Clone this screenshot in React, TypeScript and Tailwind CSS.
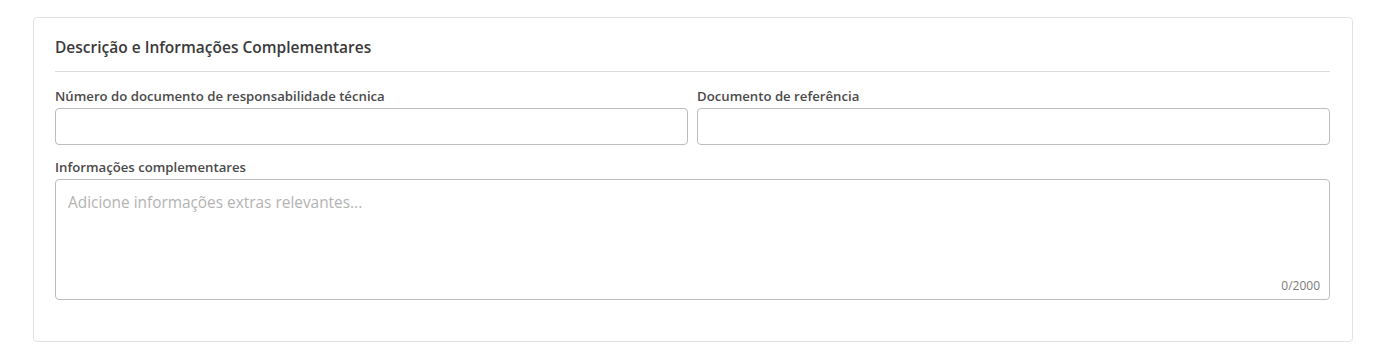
import React, { useState } from "react";

export default function App() {
  const [numero, setNumero] = useState("");
  const [referencia, setReferencia] = useState("");
  const [info, setInfo] = useState("");

  return (
    <div className="min-h-[355px] bg-white pt-[17px] pl-[33px] font-['Open_Sans',sans-serif]">
      <section className="w-[1320px] h-[325px] rounded-[4px] border border-[#e2e2e2] bg-white pl-[21px] pr-[22px] pt-[19px]">
        {/* Header */}
        <h2 className="border-b border-[#dcdcdc] pb-[14px] text-[15.5px] leading-[20px] font-semibold text-[#3a3a3a]">
          Descrição e Informações Complementares
        </h2>

        {/* Row 1 */}
        <div className="mt-[15px] grid grid-cols-2 gap-[9px]">
          <label className="flex flex-col gap-[3px]">
            <span className="text-[13.2px] leading-[18px] font-semibold text-[#4a4a4a]">
              Número do documento de responsabilidade técnica
            </span>
            <input
              value={numero}
              onChange={(e) => setNumero(e.target.value)}
              className="h-[37px] rounded-[4px] border border-[#bdbdbd] px-3 text-[15px] text-[#333] outline-none"
            />
          </label>
          <label className="flex flex-col gap-[3px]">
            <span className="text-[13.2px] leading-[18px] font-semibold text-[#4a4a4a]">
              Documento de referência
            </span>
            <input
              value={referencia}
              onChange={(e) => setReferencia(e.target.value)}
              className="h-[37px] rounded-[4px] border border-[#bdbdbd] px-3 text-[15px] text-[#333] outline-none"
            />
          </label>
        </div>

        {/* Textarea */}
        <label className="mt-[13px] flex flex-col gap-[3px]">
          <span className="text-[13.2px] leading-[18px] font-semibold text-[#4a4a4a]">
            Informações complementares
          </span>
          <div className="relative">
            <textarea
              value={info}
              maxLength={2000}
              onChange={(e) => setInfo(e.target.value)}
              placeholder="Adicione informações extras relevantes..."
              className="block h-[121px] w-full resize-none rounded-[4px] border border-[#bdbdbd] px-[12px] pt-[13px] text-[15.4px] leading-[20px] text-[#333] placeholder:text-[#b3b3b3] outline-none"
            />
            <span className="absolute right-[10px] bottom-[6px] text-[12px] leading-[16px] text-[#7a7a7a]">
              {info.length}/2000
            </span>
          </div>
        </label>
      </section>
    </div>
  );
}
